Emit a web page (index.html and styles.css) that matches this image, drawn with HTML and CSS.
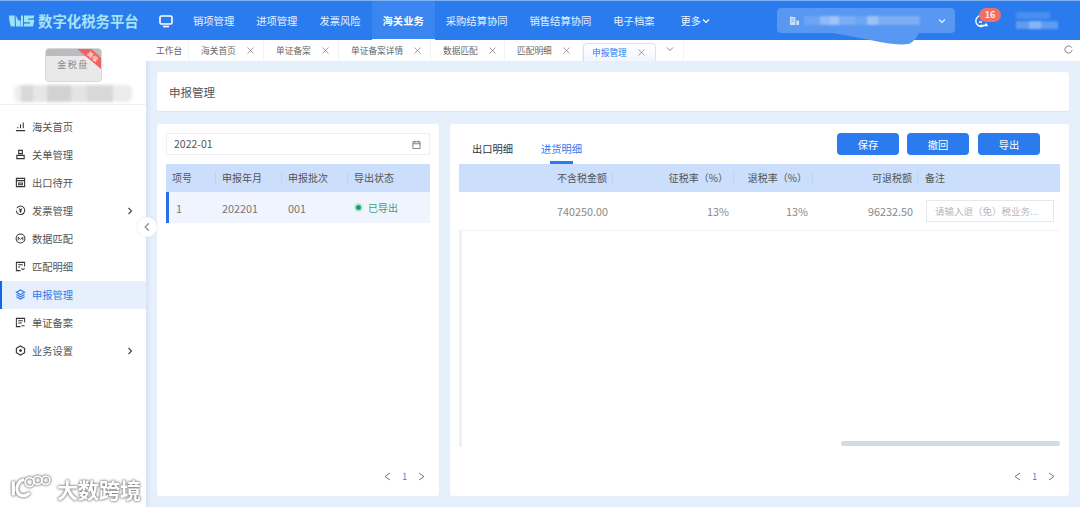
FILE: index.html
```html
<!DOCTYPE html>
<html lang="zh-CN">
<head>
<meta charset="utf-8">
<title>数字化税务平台</title>
<link rel="stylesheet" href="styles.css">
</head>
<body>
<header class="topbar">
  <div class="brand">
    <svg class="brand-mark" viewBox="0 0 27 14"><path d="M1 1.500h5.500L7 12.500H3C1.500 9 1 5 1 1.500zM7.500 1l3 5.500h2V12.500H8zM13 1.500h2V12.500h-2zM16 1.500h10.500l-1 3H20v1.200h6.500L25 12.500H15.500l1-3h5.500V8.300h-6z" fill="#9be4f8"/></svg>
    <span class="brand-name">数字化税务平台</span>
  </div>
  <svg class="monitor" viewBox="0 0 14 14"><rect x="1" y="2" width="12" height="8" rx="1.500" fill="none" stroke="#fff" stroke-width="1.600"/><path d="M4 12.500h6" stroke="#fff" stroke-width="1.600"/></svg>
  <nav class="nav">
    <a class="nav-item">销项管理</a>
    <a class="nav-item">进项管理</a>
    <a class="nav-item">发票风险</a>
    <a class="nav-item is-active">海关业务</a>
    <a class="nav-item">采购结算协同</a>
    <a class="nav-item">销售结算协同</a>
    <a class="nav-item">电子档案</a>
    <a class="nav-item nav-more">更多<svg class="more-caret" viewBox="0 0 8 8"><path d="M1 2.500l3 3 3-3" fill="none" stroke="#fff" stroke-width="1.200"/></svg></a>
  </nav>
  <div class="company">
    <svg class="company-icon" viewBox="0 0 12 12"><path d="M1 1.500l6 1V11H1zM8 6h3v5H8z" fill="#c9defa"/><path d="M2.500 4.500h3M2.500 7h3" stroke="#7fb0f3"/></svg>
    <span class="company-blur"></span>
    <svg class="company-caret" viewBox="0 0 8 8"><path d="M1 2.500l3 3 3-3" fill="none" stroke="#e8f1fe" stroke-width="1.200"/></svg>
    <svg class="smudge" viewBox="0 0 100 20"><path d="M0 1c20 3 40 7 60 11 10 2 22 3 28 2 5-1 9-7 12-13z" fill="#5897f2"/></svg>
  </div>
  <div class="bell">
    <svg class="bell-icon" viewBox="0 0 14 14"><path d="M7.500 1.500A5.500 5.500 0 1 0 12 10l1 1.500H6M5 8h3" fill="none" stroke="#fff" stroke-width="1.300"/></svg>
    <span class="badge">16</span>
  </div>
  <div class="user"><span class="user-a"></span><span class="user-b"></span></div>
</header>

<div class="shell">
  <aside class="sidebar">
    <div class="account">
      <div class="gold-card">
        <span class="gold-strip"></span>
        <span class="gold-name">金税盘</span>
        <span class="gold-ribbon">高级</span>
      </div>
      <div class="account-name"></div>
    </div>
    <ul class="menu">
      <li class="menu-item"><svg class="mi" viewBox="0 0 12 12"><path d="M1 10.500h10M3 8V6.500M6 8V3.500M9 8V1.500" stroke="#333" stroke-width="1.100" fill="none"/></svg>海关首页</li>
      <li class="menu-item"><svg class="mi" viewBox="0 0 12 12"><path d="M4 1.500h4v3.500H4zM2 7h8v3.500H2z" stroke="#333" stroke-width="1.200" fill="none"/></svg>关单管理</li>
      <li class="menu-item"><svg class="mi" viewBox="0 0 12 12"><path d="M1.500 1.500h9v9h-9zM1.500 4h9M4 6.500h4v2H4z" stroke="#333" stroke-width="1.200" fill="none"/></svg>出口待开</li>
      <li class="menu-item"><svg class="mi" viewBox="0 0 12 12"><path d="M2 3.500A4.600 4.600 0 1 1 1.400 6M4.500 4L6 5.500 7.500 4M6 5.500V8.500M4.500 6.500h3" stroke="#333" stroke-width="1.100" fill="none"/></svg>发票管理<svg class="arrow" viewBox="0 0 8 8"><path d="M2.500 1l3 3-3 3" fill="none" stroke="#444" stroke-width="1.100"/></svg></li>
      <li class="menu-item"><svg class="mi" viewBox="0 0 12 12"><circle cx="6" cy="6" r="4.800" fill="none" stroke="#333" stroke-width="1.100"/><path d="M3.500 8V4.500L6 7l2.500-2.500V8" fill="none" stroke="#333"/></svg>数据匹配</li>
      <li class="menu-item"><svg class="mi" viewBox="0 0 12 12"><path d="M10.500 6V1.500h-9v9H6M3.500 4h5M3.500 6.500h2M7 8l1.500 1.500L10.500 8" stroke="#333" stroke-width="1.100" fill="none"/></svg>匹配明细</li>
      <li class="menu-item is-active"><svg class="mi" viewBox="0 0 12 12"><path d="M6 1l4.500 2.500L6 6 1.500 3.500zM1.500 6L6 8.500 10.500 6M1.500 8.500L6 11l4.500-2.500" stroke="#2a7bee" stroke-width="1.200" fill="none"/></svg>申报管理</li>
      <li class="menu-item"><svg class="mi" viewBox="0 0 12 12"><path d="M10.500 6V1.500h-9v9H6M3.500 4h5M3.500 6.500h4M7 9.500h3.500" stroke="#333" stroke-width="1.100" fill="none"/></svg>单证备案</li>
      <li class="menu-item"><svg class="mi" viewBox="0 0 12 12"><path d="M6 1l4.500 2.500v5L6 11 1.500 8.500v-5z" stroke="#333" stroke-width="1.200" fill="none"/><circle cx="6" cy="6" r="1.500" fill="#333"/></svg>业务设置<svg class="arrow" viewBox="0 0 8 8"><path d="M2.500 1l3 3-3 3" fill="none" stroke="#444" stroke-width="1.100"/></svg></li>
    </ul>
    <div class="watermark"><svg class="wm-logo" viewBox="0 0 46 30"><path d="M4 8v16M16 6C9 8 7 14 8 19c2 6 9 7 14 2" fill="none" stroke="#fff" stroke-width="3.400"/><circle cx="22" cy="9" r="5" fill="none" stroke="#fff" stroke-width="1.800"/><circle cx="31" cy="7" r="4.500" fill="none" stroke="#fff" stroke-width="1.800"/><circle cx="40" cy="7" r="4.500" fill="none" stroke="#fff" stroke-width="1.800"/></svg><span class="wm-text">大数跨境</span></div>
  </aside>
  <button class="collapse" type="button"><svg viewBox="0 0 8 8"><path d="M5.500 1l-3 3 3 3" fill="none" stroke="#8a8f99" stroke-width="1"/></svg></button>

  <main class="content">
    <div class="tabs">
      <span class="tab tab-home">工作台</span>
      <span class="tab">海关首页<svg class="x" viewBox="0 0 7 7"><path d="M.5.500l6 6M6.500.500l-6 6" stroke="#777" stroke-width=".7"/></svg></span>
      <span class="tab">单证备案<svg class="x" viewBox="0 0 7 7"><path d="M.5.500l6 6M6.500.500l-6 6" stroke="#777" stroke-width=".7"/></svg></span>
      <span class="tab">单证备案详情<svg class="x" viewBox="0 0 7 7"><path d="M.5.500l6 6M6.500.500l-6 6" stroke="#777" stroke-width=".7"/></svg></span>
      <span class="tab">数据匹配<svg class="x" viewBox="0 0 7 7"><path d="M.5.500l6 6M6.500.500l-6 6" stroke="#777" stroke-width=".7"/></svg></span>
      <span class="tab tab-wide">匹配明细<svg class="x" viewBox="0 0 7 7"><path d="M.5.500l6 6M6.500.500l-6 6" stroke="#777" stroke-width=".7"/></svg></span>
      <span class="tab is-active">申报管理<svg class="x" viewBox="0 0 7 7"><path d="M.5.500l6 6M6.500.500l-6 6" stroke="#777" stroke-width=".7"/></svg></span>
      <span class="tab tab-more"><svg viewBox="0 0 8 8"><path d="M1 2.500l3 3 3-3" fill="none" stroke="#777" stroke-width=".9"/></svg></span>
      <svg class="refresh" viewBox="0 0 10 10"><path d="M8.500 3A4 4 0 1 0 9 5.500" fill="none" stroke="#666" stroke-width=".9"/></svg>
    </div>
    <div class="page">
      <div class="title-card">申报管理</div>
      <div class="panels">
        <section class="panel panel-left">
          <div class="date-input"><span>2022-01</span><svg class="cal" viewBox="0 0 10 10"><path d="M1 2h8v7.500H1zM1 4.200h8M3 .8v2M7 .8v2" fill="none" stroke="#555" stroke-width=".8"/></svg></div>
          <div class="ltable">
            <div class="lrow lhead"><span>项号</span><span>申报年月</span><span>申报批次</span><span>导出状态</span></div>
            <div class="lrow lbody"><span>1</span><span>202201</span><span>001</span><span class="status"><i class="dot"></i>已导出</span></div>
          </div>
          <div class="pager"><svg class="pg" viewBox="0 0 7 9"><path d="M6 1L1 4.500 6 8" fill="none" stroke="#666" stroke-width=".9"/></svg><span class="pg-num">1</span><svg class="pg" viewBox="0 0 7 9"><path d="M1 1l5 3.500L1 8" fill="none" stroke="#666" stroke-width=".9"/></svg></div>
        </section>
        <section class="panel panel-right">
          <div class="right-top">
            <div class="subtabs"><span class="subtab">出口明细</span><span class="subtab is-active">进货明细</span></div>
            <div class="actions"><button class="btn" type="button">保存</button><button class="btn" type="button">撤回</button><button class="btn" type="button">导出</button></div>
          </div>
          <div class="rtable">
            <div class="rrow rhead"><span></span><span>不含税金额</span><span>征税率（%）</span><span>退税率（%）</span><span>可退税额</span><span class="note">备注</span></div>
            <div class="rrow rbody"><span></span><span>740250.00</span><span class="pct">13%</span><span class="pct">13%</span><span>96232.50</span><span class="note"><span class="note-input">请输入退（免）税业务...</span></span></div>
            <div class="rspace"></div>
            <div class="scrollbar"><span class="thumb"></span></div>
          </div>
          <div class="pager"><svg class="pg" viewBox="0 0 7 9"><path d="M6 1L1 4.500 6 8" fill="none" stroke="#666" stroke-width=".9"/></svg><span class="pg-num">1</span><svg class="pg" viewBox="0 0 7 9"><path d="M1 1l5 3.500L1 8" fill="none" stroke="#666" stroke-width=".9"/></svg></div>
        </section>
      </div>
    </div>
  </main>
</div>
</body>
</html>
```
FILE: styles.css
```css
* { box-sizing: border-box; }
html, body { margin: 0; height: 507px; overflow: hidden; }
body { font-family: "Noto Sans CJK SC", "Noto Sans", sans-serif; color: #555; background: #e6effc; }
ul { list-style: none; margin: 0; padding: 0; }
i { font-style: normal; }

.topbar { height: 40px; display: flex; align-items: center; background: #2a7bee; border-top: 1px solid #7fb2f5; color: #fff; position: relative; z-index: 3; }
.brand { width: 159px; display: flex; align-items: center; padding-left: 8px; gap: 3px; flex: none; }
.brand-mark { width: 27px; height: 14px; flex: none; }
.brand-name { font-size: 14.400px; font-weight: 700; color: #a5e3f8; white-space: nowrap; }
.monitor { width: 14px; height: 14px; flex: none; }
.nav { display: flex; height: 39px; margin-left: 9px; flex: none; }
.nav-item { display: flex; align-items: center; padding: 0 11px; font-size: 10.300px; color: #eaf2ff; white-space: nowrap; }
.nav-item.is-active { font-weight: 700; color: #fff; background: #3a85f0; border-bottom: 1px solid #fff; }
.nav-more { padding-left: 15px; }
.more-caret { width: 8px; height: 8px; margin-left: 1px; }
.company { width: 178px; height: 25px; margin-left: 56px; background: #5897f2; border-radius: 4px; display: flex; align-items: center; padding: 0 9px 0 12px; position: relative; flex: none; }
.company-icon { width: 11px; height: 11px; flex: none; }
.company-blur { display: block; width: 116px; height: 9px; margin-left: 4px; filter: blur(.8px); background: linear-gradient(90deg, #6ea5f4 0 14%, #8fbaf7 14% 22%, #a0c5f8 22% 30%, #7dadf5 30% 44%, #6ea5f4 44% 54%, #9cc2f8 54% 64%, #7dadf5 64% 100%); }
.company-caret { width: 8px; height: 8px; margin-left: auto; flex: none; }
.smudge { position: absolute; left: 28px; top: 22px; width: 130px; height: 20px; }
.bell { width: 24px; height: 24px; margin-left: 16px; position: relative; display: flex; align-items: center; flex: none; }
.bell-icon { width: 14px; height: 14px; margin-left: 3px; }
.badge { position: absolute; left: 8px; top: -1px; width: 22px; height: 14px; border-radius: 7px; background: #ec7064; font-size: 9px; line-height: 14px; text-align: center; font-weight: 700; color: #fdeceb; }
.user { margin-left: 21px; display: flex; flex-direction: column; gap: 2px; flex: none; }
.user-a { display: block; width: 34px; height: 7px; background: #4a8ff0; filter: blur(.8px); }
.user-b { display: block; width: 42px; height: 8px; filter: blur(.8px); background: linear-gradient(90deg, #5f9cf2 0 30%, #86b5f6 30% 60%, #5f9cf2 60% 100%); }

.shell { display: flex; height: 467px; position: relative; }
.sidebar { width: 146px; flex: none; background: #fff; position: relative; display: flex; flex-direction: column; }
.account { height: 65px; border-bottom: 1px solid #f0f0f0; display: flex; flex-direction: column; align-items: center; padding-top: 8px; }
.gold-card { width: 57px; height: 34px; border-radius: 4px; background: #e9e9e9; border: 1px solid #d9d9d9; position: relative; overflow: hidden; display: flex; justify-content: center; padding-top: 9px; flex: none; }
.gold-strip { position: absolute; left: 0; right: 0; top: 0; height: 7px; background: #bcbcc0; }
.gold-name { font-size: 9px; line-height: 14px; letter-spacing: 1.500px; color: #888; }
.gold-ribbon { position: absolute; right: -9px; top: 3px; width: 34px; height: 9px; line-height: 9px; background: #ee6464; color: #fff; font-size: 6px; text-align: center; transform: rotate(40deg); }
.account-name { width: 118px; height: 17px; margin-top: 3px; filter: blur(1.500px); border-radius: 5px; background: linear-gradient(90deg, #eeeeee 0 6%, #d8d8d8 6% 16%, #e6e6e6 16% 28%, #d2d2d2 28% 48%, #e4e4e4 48% 62%, #d8d8d8 62% 84%, #ececec 84% 100%); }
.menu { padding-top: 8px; }
.menu-item { height: 28px; display: flex; align-items: center; padding: 0 0 1px 15px; font-size: 10.250px; color: #555; position: relative; }
.mi { width: 11px; height: 11px; margin-right: 6px; flex: none; }
.menu-item.is-active { background: #e6effc; color: #2a7bee; box-shadow: inset 2px 0 0 #1366e8; }
.arrow { width: 8px; height: 8px; position: absolute; right: 12px; top: 10px; }
.watermark { position: absolute; left: 9px; bottom: 6px; display: flex; align-items: center; gap: 5px; filter: drop-shadow(0 0 1px #777) drop-shadow(0 0 1px #aaa); }
.wm-logo { width: 43px; height: 27px; flex: none; }
.wm-text { font-size: 21px; line-height: 24px; color: #fff; font-weight: 700; white-space: nowrap; margin-top: 3px; }
.collapse { position: absolute; left: 137px; top: 177px; width: 20px; height: 20px; padding: 5px; border: 0; border-radius: 50%; background: #fff; box-shadow: 0 0 2px #d5dbe6; z-index: 2; }
.collapse svg { display: block; width: 10px; height: 10px; }

.content { flex: 1; display: flex; flex-direction: column; min-width: 0; box-shadow: inset 4px 0 4px -2px #d5e1f2; }
.tabs { height: 21px; background: #fff; display: flex; font-size: 8.700px; color: #666; position: relative; flex: none; }
.tab { display: flex; align-items: center; height: 21px; padding-left: 12px; border-right: 1px solid #f0f2f5; white-space: nowrap; width: 75px; flex: none; }
.tab-home { width: 43px; padding-left: 10px; }
.tab:nth-child(4) { width: 92px; }
.tab:nth-child(5) { width: 74px; }
.tab-wide { width: 78px; }
.x { width: 7px; height: 7px; margin-left: 11px; flex: none; }
.tab.is-active { width: 73px; height: 18px; margin-top: 3px; padding-left: 8px; color: #2a7bee; border: 1px solid #d5e3f7; border-bottom: 0; border-radius: 4px 4px 0 0; background: linear-gradient(#fff, #f1f6fe); }
.tab-more { width: 28px; padding: 0 0 4px 10px; }
.tab-more svg { width: 8px; height: 8px; }
.refresh { position: absolute; right: 7px; top: 5px; width: 9px; height: 9px; }

.page { flex: 1; padding: 11px; display: flex; flex-direction: column; gap: 12px; min-height: 0; }
.title-card { height: 40px; background: #fff; border-radius: 3px; border-bottom: 1px solid #dfe5ee; padding-left: 12px; font-size: 11.500px; line-height: 41px; color: #555; flex: none; }
.panels { flex: 1; display: flex; gap: 11px; min-height: 0; }
.panel { background: #fff; border-radius: 3px; position: relative; display: flex; flex-direction: column; }
.panel-left { width: 282px; padding: 9px 9px 0; flex: none; }
.panel-right { flex: 1; padding: 0 9px; }

.date-input { height: 22px; border: 1px solid #eef0f3; display: flex; align-items: center; justify-content: space-between; padding: 0 8px 2px 7px; font-size: 10.500px; color: #555; flex: none; }
.cal { width: 9px; height: 9px; margin-top: 2px; }
.ltable { margin-top: 9px; flex: 1; }
.lrow { display: grid; grid-template-columns: 49px 66px 66px 1fr; align-items: center; font-size: 10px; }
.lhead { height: 28px; background: #cbdffd; color: #555; }
.lhead span { padding-left: 6px; border-left: 1px solid #bed4f5; line-height: 14px; }
.lhead span:first-child { border-left: 0; }
.lbody { height: 31px; background: #eff4fe; color: #777; box-shadow: inset 3px 0 0 #2a6fe6; font-size: 10.800px; }
.lbody span { padding-left: 7px; }
.lbody span:first-child { padding-left: 10px; }
.status { display: flex; align-items: center; color: #3aa37c; gap: 5px; font-size: 10px; }
.dot { width: 5px; height: 5px; border-radius: 50%; background: #1e9e6c; box-shadow: 0 0 0 2px #bfe6d6; margin: 0 2px; flex: none; }

.pager { height: 42px; display: flex; align-items: center; justify-content: flex-end; gap: 11px; padding: 2px 5px 0 0; flex: none; }
.pg { width: 7px; height: 9px; flex: none; }
.pg-num { font-size: 8.500px; color: #2a7bee; }

.right-top { height: 40px; display: flex; justify-content: space-between; flex: none; }
.subtabs { display: flex; gap: 28px; padding-left: 13px; font-size: 10.250px; }
.subtab { height: 40px; line-height: 50px; position: relative; color: #333; }
.subtab.is-active { color: #2a7bee; }
.subtab.is-active::after { content: ""; position: absolute; left: 9px; right: 9px; bottom: 0; height: 3px; background: #2a7bee; }
.actions { display: flex; gap: 8px; padding: 9px 20px 0 0; }
.btn { width: 62px; height: 22px; border: 0; border-radius: 4px; background: #2a7bee; color: #fff; font: 10.250px "Noto Sans CJK SC", sans-serif; padding: 0; }
.btn:nth-child(2) { margin-right: 1px; }
.rtable { flex: 1; display: flex; flex-direction: column; min-height: 0; }
.rrow { display: grid; grid-template-columns: 49px 105px 121px 79px 105px 142px; align-items: center; font-size: 10px; text-align: right; flex: none; }
.rrow > span { padding-right: 5px; }
.rhead { height: 28px; background: #cbdffd; color: #555; }
.rhead > span { line-height: 14px; border-right: 1px solid #bed4f5; }
.rhead > span:last-child { border-right: 0; }
.rbody { height: 39px; background: #fff; color: #888; border-bottom: 1px solid #f0f2f5; font-size: 10.800px; }
.note { text-align: left; padding-left: 7px; }
.rbody .note { padding-left: 8px; padding-right: 6px; }
.note-input { display: block; height: 22px; line-height: 20px; border: 1px solid #e6e8ec; padding-left: 8px; font-size: 9.500px; color: #b5b8be; white-space: nowrap; overflow: hidden; }
.rspace { flex: 1; box-shadow: inset 3px 0 0 #eef0f4; }
.scrollbar { height: 5px; display: flex; justify-content: flex-end; flex: none; margin: -6px 0 8px; }
.thumb { width: 219px; height: 5px; border-radius: 3px; background: #d3d9e6; }
```
